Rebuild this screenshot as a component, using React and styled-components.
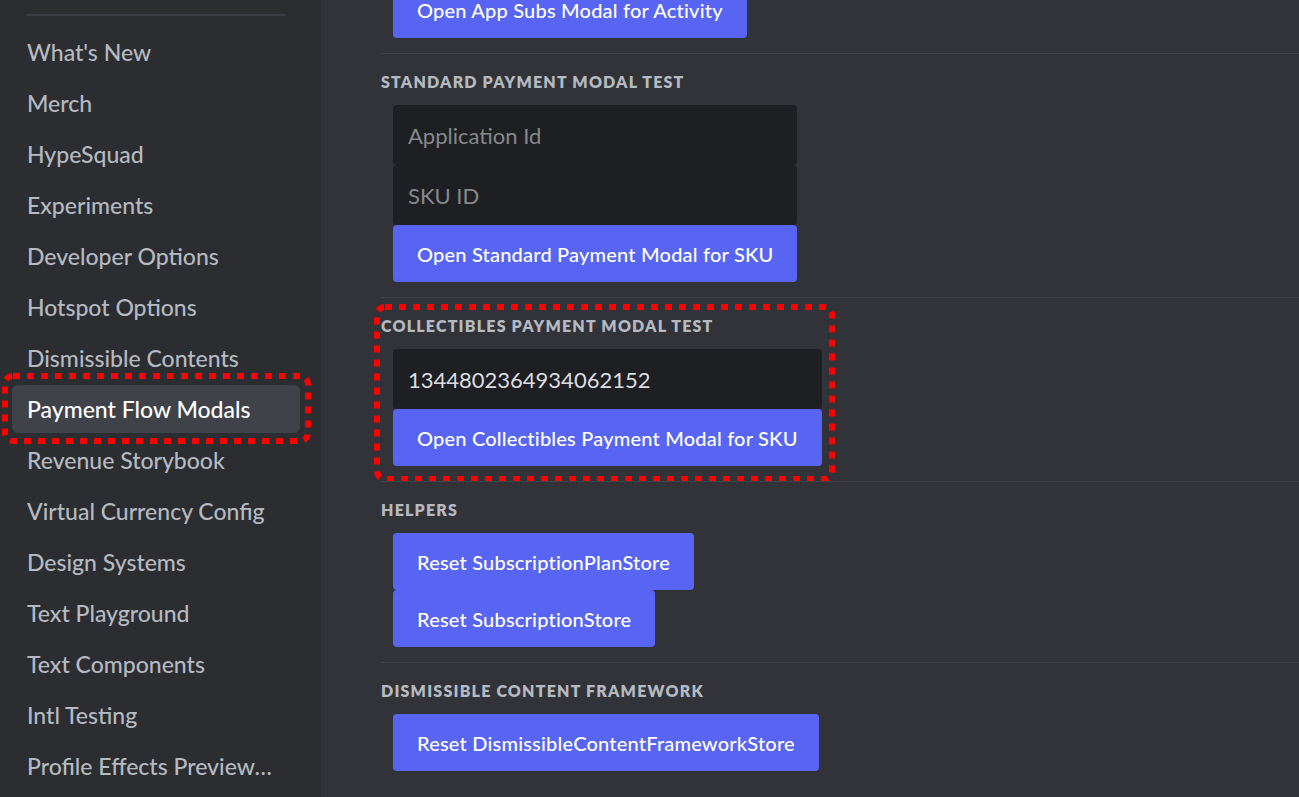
import styled, { createGlobalStyle } from "styled-components";

const GlobalStyle = createGlobalStyle`
    html, body {
        margin: 0;
        padding: 0;
        height: 100%;
        overflow: hidden;
        background: #313338;
    }
    body {
        font-family: Lato, "Noto Sans", sans-serif;
    }
    * {
        box-sizing: border-box;
    }
`;

const navItems = [
    "What's New",
    "Merch",
    "HypeSquad",
    "Experiments",
    "Developer Options",
    "Hotspot Options",
    "Dismissible Contents",
    "Payment Flow Modals",
    "Revenue Storybook",
    "Virtual Currency Config",
    "Design Systems",
    "Text Playground",
    "Text Components",
    "Intl Testing",
    "Profile Effects Preview Tool",
];

// red dotted annotation drawn over the screenshot
const Marker = ({ $top, $left, $right, $bottom, $width, $height }) => (
    <MarkerBox
        $top={$top}
        $left={$left}
        $right={$right}
        $bottom={$bottom}
        $width={$width}
        $height={$height}
    >
        <svg width="100%" height="100%">
            <rect
                x="0"
                y="0"
                width="100%"
                height="100%"
                rx="8"
                fill="none"
                stroke="#ff0000"
                strokeWidth="6"
                strokeDasharray="7 7"
            />
        </svg>
    </MarkerBox>
);

const App = () => {
    return (
        <>
            <GlobalStyle />
            <Page>
                <Sidebar>
                    <SidebarDivider />
                    {navItems.map((label) => {
                        const selected = label === "Payment Flow Modals";
                        return (
                            <NavItem key={label} $selected={selected}>
                                <NavLabel>{label}</NavLabel>
                                {selected && (
                                    <Marker $top={-9} $left={-7} $right={-8} $bottom={-8} />
                                )}
                            </NavItem>
                        );
                    })}
                </Sidebar>
                <Main>
                    <Content>
                        <Section $first>
                            <Group>
                                <Button>Open App Subs Modal for Activity</Button>
                            </Group>
                        </Section>
                        <Section>
                            <Heading>Standard Payment Modal Test</Heading>
                            <Group>
                                <Input placeholder="Application Id" />
                                <Input placeholder="SKU ID" />
                                <Button>Open Standard Payment Modal for SKU</Button>
                            </Group>
                        </Section>
                        <Section>
                            <Heading>Collectibles Payment Modal Test</Heading>
                            <Group>
                                <Input defaultValue="1344802364934062152" />
                                <Button>Open Collectibles Payment Modal for SKU</Button>
                            </Group>
                            <Marker $top={9} $left={-4} $width={455} $height={172} />
                        </Section>
                        <Section>
                            <Heading>Helpers</Heading>
                            <Group $align="flex-start">
                                <Button>Reset SubscriptionPlanStore</Button>
                                <Button>Reset SubscriptionStore</Button>
                            </Group>
                        </Section>
                        <Section>
                            <Heading>Dismissible Content Framework</Heading>
                            <Group>
                                <Button>Reset DismissibleContentFrameworkStore</Button>
                            </Group>
                        </Section>
                    </Content>
                </Main>
            </Page>
        </>
    );
};

const px = (v) => (v === undefined ? "auto" : `${v}px`);

const MarkerBox = styled.div`
    position: absolute;
    top: ${({ $top }) => px($top)};
    left: ${({ $left }) => px($left)};
    right: ${({ $right }) => px($right)};
    bottom: ${({ $bottom }) => px($bottom)};
    width: ${({ $width }) => px($width)};
    height: ${({ $height }) => px($height)};
    pointer-events: none;

    svg {
        display: block;
        overflow: visible;
    }
`;

const Page = styled.div`
    display: flex;
    height: 100vh;
    width: 100%;
    overflow: hidden;
`;

const Sidebar = styled.nav`
    width: 321px;
    flex-shrink: 0;
    background: #2b2d31;
    padding: 14px 21px 0 12px;
    overflow: hidden;
`;

const SidebarDivider = styled.div`
    height: 2px;
    margin: 0 15px 12px;
    background: #3b3d44;
`;

const NavItem = styled.div`
    position: relative;
    height: 48px;
    margin-bottom: 3px;
    display: flex;
    align-items: center;
    padding: 0 24px 0 15px;
    border-radius: 6px;
    background: ${({ $selected }) => ($selected ? "#404249" : "transparent")};
    color: ${({ $selected }) => ($selected ? "#ffffff" : "#b5bac1")};
    font-size: 23px;
    font-weight: 500;
`;

const NavLabel = styled.span`
    white-space: nowrap;
    overflow: hidden;
    text-overflow: ellipsis;
`;

const Main = styled.main`
    flex: 1;
    min-width: 0;
    background: #313338;
    padding-left: 60px;
    overflow: hidden;
`;

const Content = styled.div`
    margin-top: -19px;
`;

const Section = styled.section`
    position: relative;
    border-top: ${({ $first }) => ($first ? "none" : "1px solid #3f4147")};
    padding: ${({ $first }) => ($first ? "0" : "19px")} 0 15px;
`;

const Heading = styled.h3`
    margin: 0 0 14px;
    font-size: 16px;
    line-height: 18px;
    font-weight: 800;
    text-transform: uppercase;
    letter-spacing: 1.2px;
    color: #b5bac1;
`;

const Group = styled.div`
    display: flex;
    flex-direction: column;
    align-items: ${({ $align = "stretch" }) => $align};
    width: fit-content;
    margin-left: 12px;
`;

const Input = styled.input`
    width: 0;
    min-width: 100%;
    height: 60px;
    padding: 0 15px;
    border: none;
    border-radius: 4px;
    background: #1e1f22;
    color: #dbdee1;
    font-family: inherit;
    font-size: 22px;
    outline: none;

    &::placeholder {
        color: #87898c;
    }
`;

const Button = styled.button`
    height: 57px;
    padding: 0 24px;
    border: none;
    border-radius: 4px;
    background: #5865f2;
    color: #ffffff;
    font-family: inherit;
    font-size: 20px;
    font-weight: 500;
    letter-spacing: 0.2px;
    white-space: nowrap;
    cursor: pointer;
`;

export default App;
